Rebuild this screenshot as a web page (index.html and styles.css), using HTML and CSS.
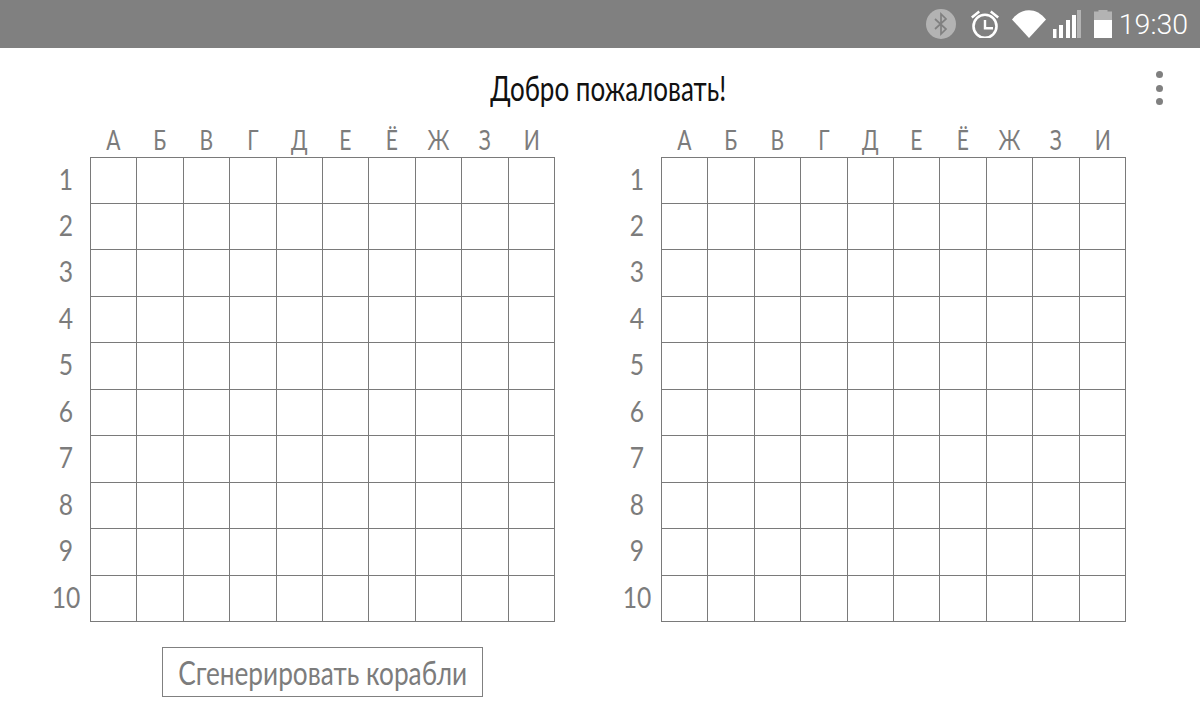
FILE: index.html
```html
<!DOCTYPE html>
<html lang="ru">
<head>
<meta charset="utf-8">
<title>Морской бой</title>
<link rel="stylesheet" href="styles.css">
</head>
<body>
<div class="status">
  <svg class="ic-bt" viewBox="0 0 30 30" width="30" height="30"><circle cx="15" cy="15" r="15" fill="#b3b3b3"/><path d="M9 10l11 10-5 5V5l5 5-11 10" fill="none" stroke="#808080" stroke-width="1.7"/></svg>
  <svg class="ic-alarm" viewBox="0 0 28 28" width="28" height="28"><circle cx="14" cy="16.300" r="11.500" fill="none" stroke="#fff" stroke-width="2.600"/><path d="M14 10v8.300h8" fill="none" stroke="#fff" stroke-width="2.400"/><path d="M0 6.500L7.500 0.500l1.500 1.900L1.600 8.500zM28 6.500L20.500 0.500 19 2.400l7.400 6.100z" fill="#fff"/></svg>
  <svg class="ic-wifi" viewBox="0 0 34 28" width="34" height="28"><path d="M0 9.500C9.500 -3 24.500 -3 34 9.500L17 28z" fill="#fff"/></svg>
  <svg class="ic-signal" viewBox="0 0 28 28" width="28" height="28"><path d="M0 19h3.500v9H0zM6 15h4v13H6zM13 10h4v18h-4zM19 5h4v23h-4z" fill="#fff"/><path d="M24 0h4v28h-4z" fill="#b3b3b3"/></svg>
  <svg class="ic-batt" viewBox="0 0 18 28" width="18" height="28"><path d="M4.500 0h9v1.500H18V10H0V1.500h4.500z" fill="#b3b3b3"/><path d="M0 10h18v18H0z" fill="#fff"/></svg>
  <span class="clock">19:30</span>
</div>
<header class="title-row">
  <h1 class="title">Добро пожаловать!</h1>
  <div class="menu"><i></i><i></i><i></i></div>
</header>
<main class="boards">
  <section class="board-col">
    <div class="board" data-board></div>
    <button class="generate"><span class="generate-label">Сгенерировать корабли</span></button>
  </section>
  <section class="board-col">
    <div class="board" data-board></div>
  </section>
</main>
<script src="app.js"></script>
</body>
</html>
```
FILE: styles.css
```css
* { box-sizing: border-box; }
html, body { margin: 0; padding: 0; }
body {
  width: 1200px;
  height: 723px;
  overflow: hidden;
  background: #fff;
  font-family: Lato, "Noto Sans", sans-serif;
  color: #7c7c7c;
}
.status {
  height: 48px;
  background: #808080;
  display: flex;
  align-items: center;
  justify-content: flex-end;
  padding-right: 12px;
}
.ic-bt { margin-right: 15px; }
.ic-alarm { margin-right: 13px; }
.ic-wifi { margin-right: 7px; }
.ic-signal { margin-right: 13px; }
.ic-batt { margin-right: 7px; }
.clock {
  font-family: Roboto, sans-serif;
  font-size: 28.500px;
  color: #fff;
  font-weight: 300;
}
.title-row {
  height: 79px;
  display: flex;
  align-items: center;
  justify-content: center;
  position: relative;
  padding-left: 16px;
}
.title {
  margin: 0;
  font-size: 34px;
  font-weight: 400;
  color: #111;
  white-space: nowrap;
  transform: scaleX(.765);
}
.menu {
  position: absolute;
  left: 1156px;
  top: 23px;
  display: flex;
  flex-direction: column;
  gap: 6.500px;
}
.menu i {
  display: block;
  width: 7px;
  height: 7px;
  border-radius: 50%;
  background: #808080;
}
.boards {
  display: flex;
  gap: 66px;
  padding-left: 50px;
}
.board-col {
  display: flex;
  flex-direction: column;
  align-items: flex-start;
}
.board {
  display: grid;
  grid-template-columns: 40px 46px 47px 46px 47px 46px 46px 47px 46px 47px 47px;
  grid-template-rows: 30px 46px 46px 47px 46px 47px 46px 47px 46px 47px 47px;
  width: 505px;
}
.col-head {
  display: flex;
  align-items: center;
  justify-content: center;
  font-size: 27px;
  line-height: 1;
  padding: 0 0 5px 1px;
  transform: scaleX(.78);
}
.row-head {
  display: flex;
  align-items: center;
  justify-content: center;
  font-size: 29px;
  padding: 0 8px 4px 0;
  transform: scaleX(.85);
  transform-origin: 16px 50%;
}
.cell {
  border-left: 1px solid #7a7a7a;
  border-top: 1px solid #7a7a7a;
}
.cell.last-col { border-right: 1px solid #7a7a7a; }
.cell.last-row { border-bottom: 1px solid #7a7a7a; }
.generate {
  margin: 25px 0 0 112px;
  width: 321px;
  height: 50px;
  display: flex;
  align-items: center;
  justify-content: center;
  background: #fff;
  border: 1px solid #808080;
  border-radius: 0;
  font-family: inherit;
  color: #7c7c7c;
  padding: 0;
  white-space: nowrap;
}
.generate-label {
  display: inline-block;
  flex: none;
  font-size: 33px;
  transform: scaleX(.795);
}
```
FILE: app.js
```js
var letters = ["А","Б","В","Г","Д","Е","Ё","Ж","З","И"];
document.querySelectorAll("[data-board]").forEach(function (board) {
  function add(cls, text) {
    var d = document.createElement("div");
    d.className = cls;
    if (text) d.textContent = text;
    board.appendChild(d);
  }
  add("corner");
  letters.forEach(function (l) { add("col-head", l); });
  for (var r = 1; r <= 10; r++) {
    add("row-head", String(r));
    for (var c = 0; c < 10; c++) {
      add("cell" + (c === 9 ? " last-col" : "") + (r === 10 ? " last-row" : ""));
    }
  }
});
```
